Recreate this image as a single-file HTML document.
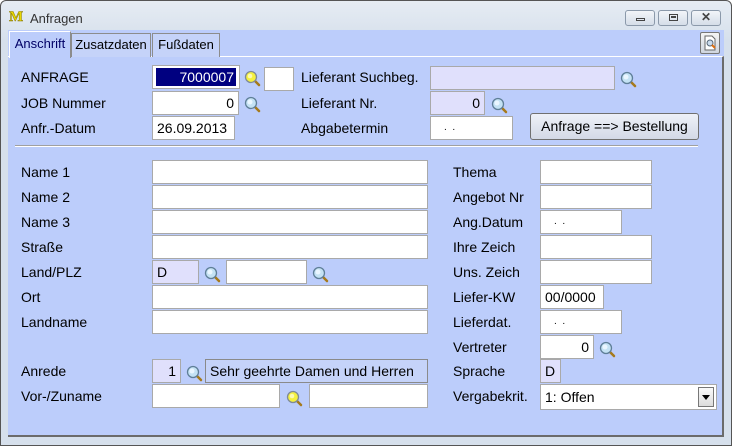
<!DOCTYPE html>
<html><head><meta charset="utf-8"><style>
*{margin:0;padding:0;box-sizing:border-box}
body{width:732px;height:446px;overflow:hidden;background:#fff;font-family:"Liberation Sans",Arial,sans-serif;font-size:14px;color:#000;position:relative}
.win{position:absolute;left:0;top:0;width:732px;height:446px;border:1px solid #555;border-radius:6px 6px 0 0;background:linear-gradient(#e6ecf3,#d6e0ec 40px,#d6e0ec)}
.a{position:absolute}
.l{position:absolute;font-size:14px;line-height:16px;white-space:nowrap}
.f{position:absolute;height:24px;background:#fff;border:1px solid #a9a9a9;font-size:14px;line-height:22px;padding:0 4px;white-space:nowrap}
.lv{background:#e0e0fc}
.r{text-align:right}
.m{position:absolute;width:18px;height:18px}
.tab{position:absolute;top:33px;height:24px;background:#c5d3f9;border:1px solid #8c8c8c;border-bottom:none;font-size:13px;line-height:22px;text-align:center}
.wb{position:absolute;top:10px;height:16px;border:1px solid #8b99aa;border-radius:3px;background:linear-gradient(#f2f5f9,#d5dde8)}
</style></head><body>
<svg width="0" height="0" style="position:absolute"><defs>
<symbol id="mg" viewBox="0 0 18 18"><line x1="11" y1="11" x2="16" y2="16" stroke="#a67a1c" stroke-width="2.5" stroke-linecap="round"/><circle cx="8" cy="8" r="5.5" fill="#c4e2f4" stroke="#5f7f98" stroke-width="1.3"/><circle cx="7" cy="7" r="2.5" fill="#eaf6ff"/></symbol>
<symbol id="my" viewBox="0 0 18 18"><line x1="11" y1="11" x2="16" y2="16" stroke="#a67a1c" stroke-width="2.5" stroke-linecap="round"/><circle cx="8" cy="8" r="5.5" fill="#f4f040" stroke="#7f8a98" stroke-width="1.3"/><circle cx="7" cy="7" r="2.3" fill="#fbfab0"/></symbol>
</defs></svg>
<div class="win"></div>
<div class="l" style="left:9px;top:9px;font-family:'Liberation Serif',serif;font-weight:bold;color:#e8d800;-webkit-text-stroke:0.5px #8a7a00;font-size:15px">M</div>
<div class="l" style="left:30px;top:11px;font-size:13px;color:#333">Anfragen</div>
<div class="wb" style="left:625px;width:30px"><div class="a" style="left:10px;top:7px;width:9px;height:3px;border:1px solid #444"></div></div>
<div class="wb" style="left:658px;width:30px"><div class="a" style="left:10px;top:3px;width:9px;height:7px;border:1px solid #444"></div><div class="a" style="left:12px;top:5px;width:5px;height:2px;background:#444"></div></div>
<div class="wb" style="left:691px;width:30px;text-align:center;font-size:12px;line-height:13px;color:#444;font-weight:bold">✕</div>
<!-- tab strip -->
<div class="a" style="left:8px;top:30px;width:716px;height:27px;background:#bccdfb"></div>
<div class="a" style="left:8px;top:56px;width:716px;height:381px;background:#bccdfb;border-right:2px solid #6b6b6b;border-bottom:2px solid #6b6b6b;border-top:1px solid #fff"></div>
<div class="tab" style="left:71px;width:80px">Zusatzdaten</div>
<div class="tab" style="left:152px;width:68px">Fußdaten</div>
<div class="tab" style="left:9px;top:31px;height:27px;width:62px;background:#bccdfb;color:#000066;border-color:#fff #8c8c8c #fff #fff;line-height:24px">Anschrift</div>
<div class="a" style="left:700px;top:32px;width:20px;height:22px;border:1px solid #777;border-radius:2px;background:linear-gradient(#f4f4f4,#cfd6e0)"><svg width="18" height="20" viewBox="0 0 18 20"><path d="M4 3h7l3 3v11H4z" fill="#fff" stroke="#666"/><circle cx="9" cy="10" r="3" fill="#cde" stroke="#567"/><line x1="11" y1="12" x2="14" y2="15" stroke="#e07010" stroke-width="2"/></svg></div>
<!-- top block -->
<div class="l" style="left:21px;top:69px">ANFRAGE</div>
<div class="f r" style="left:152px;top:65px;width:88px;padding:2px 3px"><div style="background:#000080;color:#fff;line-height:18px;height:18px;padding-right:2px">7000007</div></div>
<svg class="m" style="left:243px;top:69px"><use href="#my"/></svg>
<div class="f" style="left:264px;top:67px;width:30px"></div>
<div class="l" style="left:21px;top:95px">JOB Nummer</div>
<div class="f r" style="left:152px;top:91px;width:87px">0</div>
<svg class="m" style="left:243px;top:95px"><use href="#mg"/></svg>
<div class="l" style="left:21px;top:120px">Anfr.-Datum</div>
<div class="f" style="left:152px;top:116px;width:83px">26.09.2013</div>
<div class="l" style="left:301px;top:69px">Lieferant Suchbeg.</div>
<div class="f lv" style="left:430px;top:66px;width:185px"></div>
<svg class="m" style="left:619px;top:70px"><use href="#mg"/></svg>
<div class="l" style="left:301px;top:95px">Lieferant Nr.</div>
<div class="f lv r" style="left:430px;top:91px;width:55px">0</div>
<svg class="m" style="left:490px;top:96px"><use href="#mg"/></svg>
<div class="l" style="left:301px;top:120px">Abgabetermin</div>
<div class="f" style="left:430px;top:116px;width:83px;font-size:10px;padding-left:13px">. &nbsp;.</div>
<div class="a" style="left:530px;top:113px;width:169px;height:27px;border:1px solid #707070;border-radius:3px;background:linear-gradient(#eef1f8,#d3d9e6);text-align:center;line-height:25px;font-size:14px">Anfrage ==&gt; Bestellung</div>
<div class="a" style="left:15px;top:145px;width:683px;height:2px;border-top:1px solid #a0a0a0;border-bottom:1px solid #fff"></div>
<!-- left lower -->
<div class="l" style="left:21px;top:164px">Name 1</div><div class="f" style="left:152px;top:160px;width:276px"></div>
<div class="l" style="left:21px;top:189px">Name 2</div><div class="f" style="left:152px;top:185px;width:276px"></div>
<div class="l" style="left:21px;top:214px">Name 3</div><div class="f" style="left:152px;top:210px;width:276px"></div>
<div class="l" style="left:21px;top:239px">Straße</div><div class="f" style="left:152px;top:235px;width:276px"></div>
<div class="l" style="left:21px;top:264px">Land/PLZ</div>
<div class="f lv" style="left:152px;top:260px;width:47px">D</div>
<svg class="m" style="left:203px;top:265px"><use href="#mg"/></svg>
<div class="f" style="left:226px;top:260px;width:81px"></div>
<svg class="m" style="left:311px;top:265px"><use href="#mg"/></svg>
<div class="l" style="left:21px;top:289px">Ort</div><div class="f" style="left:152px;top:285px;width:276px"></div>
<div class="l" style="left:21px;top:314px">Landname</div><div class="f" style="left:152px;top:310px;width:276px"></div>
<div class="l" style="left:21px;top:363px">Anrede</div>
<div class="f lv r" style="left:152px;top:359px;width:29px">1</div>
<svg class="m" style="left:185px;top:364px"><use href="#mg"/></svg>
<div class="f" style="left:205px;top:359px;width:223px;background:#c5d3f9;border-color:#8a8a8a">Sehr geehrte Damen und Herren</div>
<div class="l" style="left:21px;top:388px">Vor-/Zuname</div>
<div class="f" style="left:152px;top:384px;width:128px"></div>
<svg class="m" style="left:285px;top:389px"><use href="#my"/></svg>
<div class="f" style="left:309px;top:384px;width:119px"></div>
<!-- right lower -->
<div class="l" style="left:453px;top:164px">Thema</div><div class="f" style="left:540px;top:160px;width:112px"></div>
<div class="l" style="left:453px;top:189px">Angebot Nr</div><div class="f" style="left:540px;top:185px;width:112px"></div>
<div class="l" style="left:453px;top:214px">Ang.Datum</div><div class="f" style="left:540px;top:210px;width:82px;font-size:10px;padding-left:13px">. &nbsp;.</div>
<div class="l" style="left:453px;top:239px">Ihre Zeich</div><div class="f" style="left:540px;top:235px;width:112px"></div>
<div class="l" style="left:453px;top:264px">Uns. Zeich</div><div class="f" style="left:540px;top:260px;width:112px"></div>
<div class="l" style="left:453px;top:289px">Liefer-KW</div><div class="f" style="left:540px;top:285px;width:64px">00/0000</div>
<div class="l" style="left:453px;top:314px">Lieferdat.</div><div class="f" style="left:540px;top:310px;width:82px;font-size:10px;padding-left:13px">. &nbsp;.</div>
<div class="l" style="left:453px;top:339px">Vertreter</div><div class="f r" style="left:540px;top:335px;width:54px">0</div>
<svg class="m" style="left:598px;top:340px"><use href="#mg"/></svg>
<div class="l" style="left:453px;top:363px">Sprache</div><div class="f lv" style="left:540px;top:359px;width:21px">D</div>
<div class="l" style="left:453px;top:388px">Vergabekrit.</div>
<div class="f" style="left:540px;top:384px;width:177px;height:26px;line-height:25px">1: Offen</div>
<div class="a" style="left:698px;top:387px;width:16px;height:20px;border:1px solid #777;background:linear-gradient(#fafafa,#dcdcdc)"><div class="a" style="left:3px;top:7px;width:0;height:0;border-left:4px solid transparent;border-right:4px solid transparent;border-top:5px solid #000"></div></div>
</body></html>
